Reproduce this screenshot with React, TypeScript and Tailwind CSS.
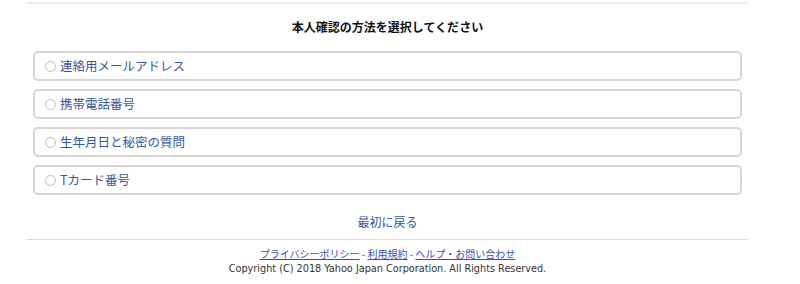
import React from 'react';

const options = ['連絡用メールアドレス', '携帯電話番号', '生年月日と秘密の質問', 'Tカード番号'];

export default function App() {
  return (
    <div className="min-h-screen bg-white font-['Noto_Sans_CJK_JP',sans-serif] text-[#333]">
      <div className="ml-[27px] w-[721px]">
        <div className="h-[4px] border-b-2 border-[#ececec]" />
        <h1 className="mt-[15px] text-center text-[12px] font-bold leading-[16px] text-[#111]">
          本人確認の方法を選択してください
        </h1>
        <ul className="mx-[6px] mt-[16px] flex flex-col gap-[8px]">
          {options.map((label) => (
            <li key={label}>
              <label className="flex h-[30px] cursor-pointer items-center gap-[4px] rounded-[5px] border-2 border-[#d6d6d6] pl-[10px] pr-[10px] text-[12.5px] text-[#34589c]">
                <span className="h-[11px] w-[11px] rounded-full border border-[#bdbdbd]" />
                {label}
              </label>
            </li>
          ))}
        </ul>
        <div className="border-b border-[#dcdcdc] pt-[19px] pb-[9px] text-center text-[12px] leading-[16px]">
          <a href="#" className="text-[#34589c]">最初に戻る</a>
        </div>
        <footer className="pt-[7px] text-center text-[10px] leading-[14px]">
          <div>
            <a href="#" className="text-[#3a4cc0] underline">プライバシーポリシー</a>
            <span className="text-[#666]">&nbsp;-&nbsp;</span>
            <a href="#" className="text-[#3a4cc0] underline">利用規約</a>
            <span className="text-[#666]">&nbsp;-&nbsp;</span>
            <a href="#" className="text-[#3a4cc0] underline">ヘルプ・お問い合わせ</a>
          </div>
          <p className="mt-px font-['DejaVu_Sans',sans-serif] text-[9.7px] text-[#333]">
            Copyright (C) 2018 Yahoo Japan Corporation. All Rights Reserved.
          </p>
        </footer>
      </div>
    </div>
  );
}
